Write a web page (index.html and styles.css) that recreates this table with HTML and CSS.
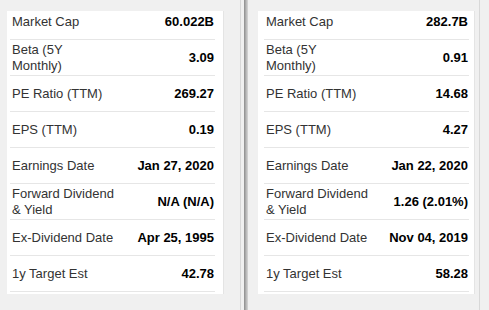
FILE: index.html
```html
<!DOCTYPE html>
<html>
<head>
<meta charset="utf-8">
<link rel="stylesheet" href="styles.css">
</head>
<body>
<div class="wrap">
  <section class="panel panel-a">
    <div class="card card-a">
      <div class="rows">
        <div class="row"><span class="label">Market Cap</span><span class="value">60.022B</span></div>
        <div class="row"><span class="label">Beta (5Y Monthly)</span><span class="value">3.09</span></div>
        <div class="row"><span class="label">PE Ratio (TTM)</span><span class="value">269.27</span></div>
        <div class="row"><span class="label">EPS (TTM)</span><span class="value">0.19</span></div>
        <div class="row"><span class="label">Earnings Date</span><span class="value">Jan 27, 2020</span></div>
        <div class="row"><span class="label">Forward Dividend &amp; Yield</span><span class="value">N/A (N/A)</span></div>
        <div class="row"><span class="label">Ex-Dividend Date</span><span class="value">Apr 25, 1995</span></div>
        <div class="row"><span class="label">1y Target Est</span><span class="value">42.78</span></div>
      </div>
    </div>
    <div class="track track-a"></div>
  </section>
  <section class="panel panel-b">
    <div class="shadow"></div>
    <div class="card card-b">
      <div class="rows">
        <div class="row"><span class="label">Market Cap</span><span class="value">282.7B</span></div>
        <div class="row"><span class="label">Beta (5Y Monthly)</span><span class="value">0.91</span></div>
        <div class="row"><span class="label">PE Ratio (TTM)</span><span class="value">14.68</span></div>
        <div class="row"><span class="label">EPS (TTM)</span><span class="value">4.27</span></div>
        <div class="row"><span class="label">Earnings Date</span><span class="value">Jan 22, 2020</span></div>
        <div class="row"><span class="label">Forward Dividend &amp; Yield</span><span class="value">1.26 (2.01%)</span></div>
        <div class="row"><span class="label">Ex-Dividend Date</span><span class="value">Nov 04, 2019</span></div>
        <div class="row"><span class="label">1y Target Est</span><span class="value">58.28</span></div>
      </div>
    </div>
    <div class="track track-b"></div>
  </section>
</div>
</body>
</html>
```

FILE: styles.css
```css
html, body {
  margin: 0;
  padding: 0;
  background: #f0f0f0;
}
body {
  font-family: "Liberation Sans", Arial, sans-serif;
  font-size: 13px;
  color: #333;
}
.wrap {
  display: flex;
  width: 489px;
  height: 310px;
  overflow: hidden;
}
.panel {
  display: flex;
  align-items: flex-start;
  height: 310px;
  background: #f0f0f0;
}
.panel-a {
  width: 244px;
}
.panel-b {
  width: 245px;
}
.shadow {
  width: 4px;
  align-self: stretch;
  background: linear-gradient(to right, #8c8c8c, #b4b4b4 50%, #d8d8d8);
}
.card {
  width: 216px;
  height: 283px;
  margin-top: 11px;
  background: #fff;
  border-right: 1px solid #e4e4e4;
  overflow: hidden;
}
.card-a {
  margin-left: 7px;
  padding-left: 3px;
  width: 213px;
}
.card-b {
  margin-left: 10px;
  padding-left: 6px;
  width: 210px;
}
.rows {
  width: 205px;
  margin-top: -7px;
}
.row {
  display: flex;
  align-items: center;
  justify-content: space-between;
  height: 35px;
  border-bottom: 1px solid #e6e6e6;
  padding-right: 1px;
}
.label {
  max-width: 102px;
  padding-left: 2px;
  line-height: 16px;
  color: #333;
}
.value {
  font-weight: bold;
  color: #000;
  line-height: 16px;
  white-space: nowrap;
}
.track {
  width: 1px;
  align-self: stretch;
  background: #d8d8d8;
}
.track-a {
  margin-left: 16px;
}
.track-b {
  margin-left: 4px;
}
```
